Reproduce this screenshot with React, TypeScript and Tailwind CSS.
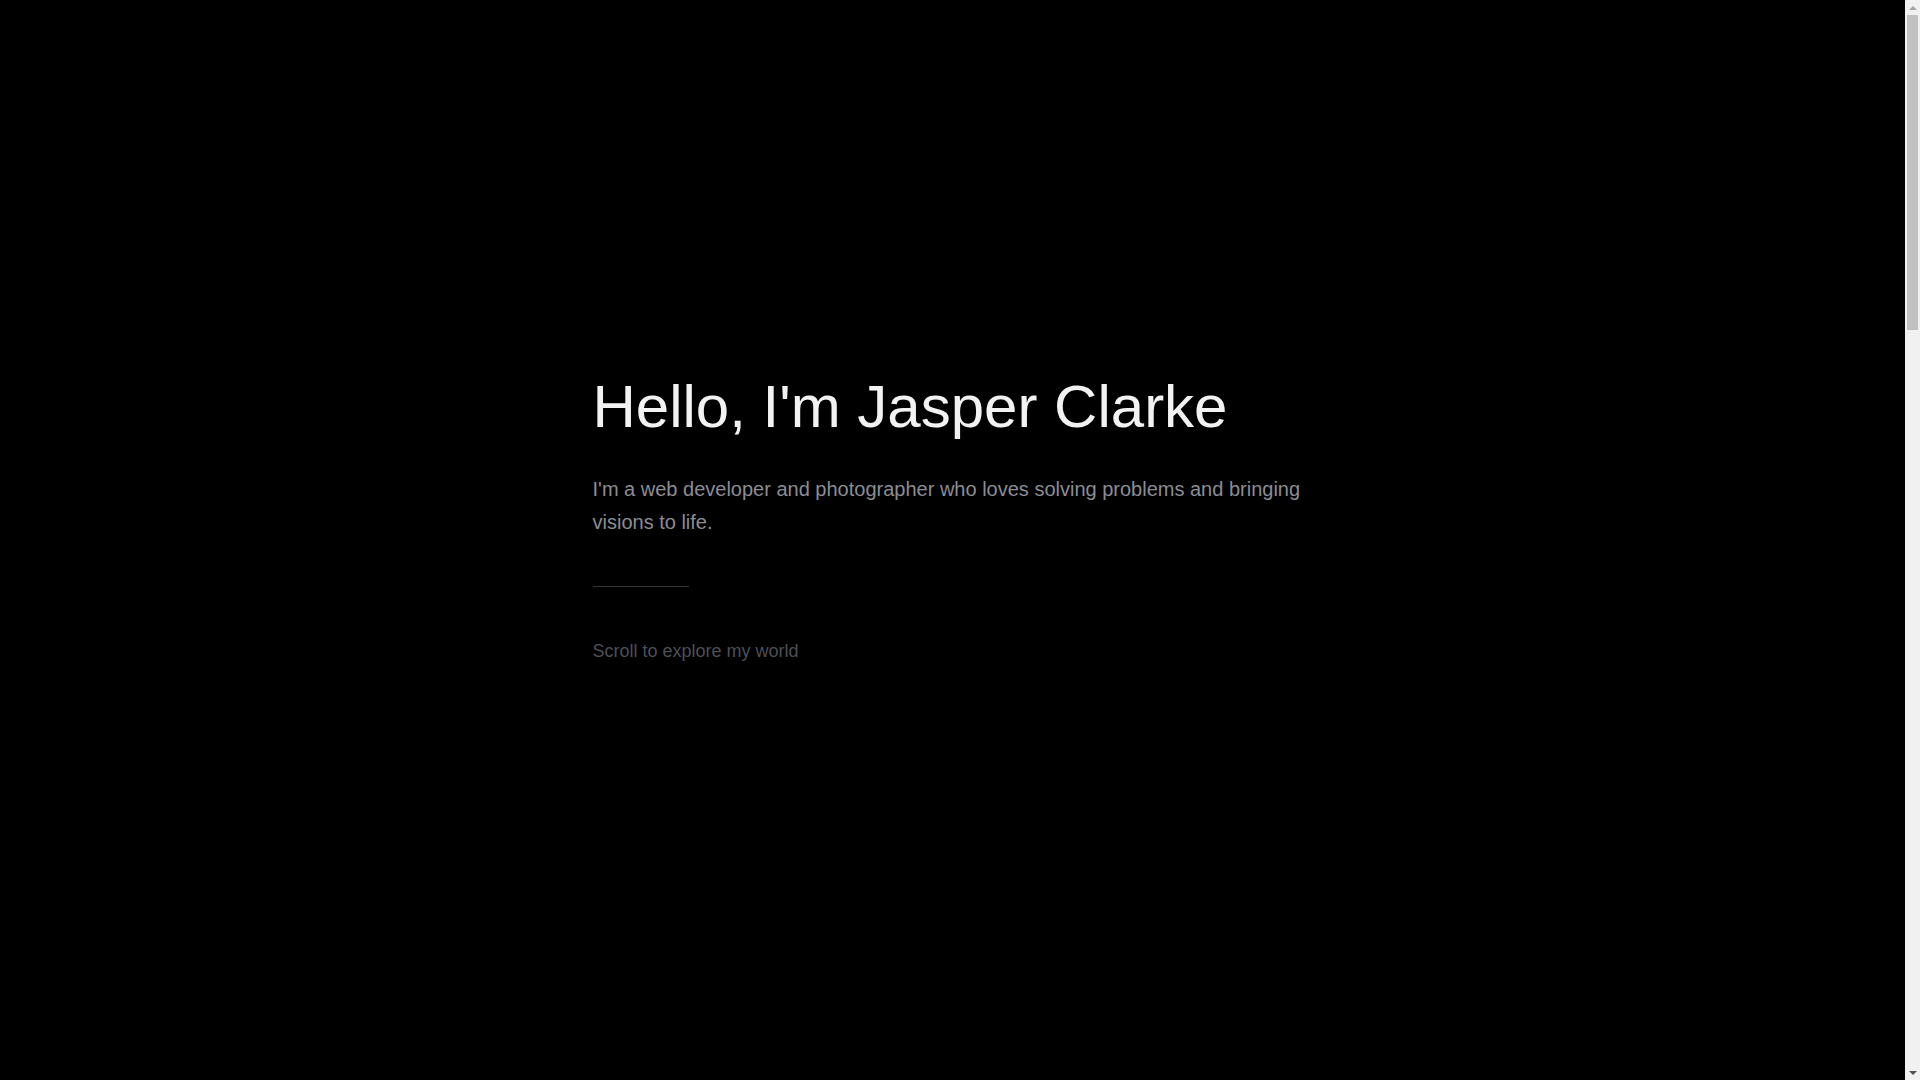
import React from "react";

function ScrollBar() {
  return (
    <div className="w-[15px] h-screen shrink-0 bg-[#f1f1f1] flex flex-col items-center">
      <div className="h-[15px] w-full flex items-center justify-center">
        <div className="w-0 h-0 border-l-[4px] border-r-[4px] border-b-[4px] border-l-transparent border-r-transparent border-b-[#a3a3a3]" />
      </div>
      <div className="w-[11px] h-[315px] bg-[#c1c1c1]" />
      <div className="flex-1" />
      <div className="h-[15px] w-full flex items-center justify-center">
        <div className="w-0 h-0 border-l-[4px] border-r-[4px] border-t-[4px] border-l-transparent border-r-transparent border-t-[#505050]" />
      </div>
    </div>
  );
}

export default function App() {
  return (
    <div
      className="h-screen flex bg-black text-white overflow-hidden"
      style={{ fontFamily: '"Liberation Sans", Arial, sans-serif' }}
    >
      <main className="flex-1 min-w-0">
        <section className="h-[1080px] flex items-center pb-[38px]">
          <div className="w-full max-w-3xl mx-auto px-6">
            <h1 className="text-6xl leading-none font-normal text-[#f2f2f2] mb-9">
              Hello, I'm Jasper Clarke
            </h1>
            <p className="text-xl leading-relaxed text-[#8b8d94]">
              I'm a web developer and photographer who loves solving problems and bringing visions to life.
            </p>
            <div className="mt-12 w-24 h-px bg-[#333438]" />
            <p className="mt-[50px] text-lg text-[#4d4f57]">Scroll to explore my world</p>
          </div>
        </section>
      </main>
      <ScrollBar />
    </div>
  );
}
